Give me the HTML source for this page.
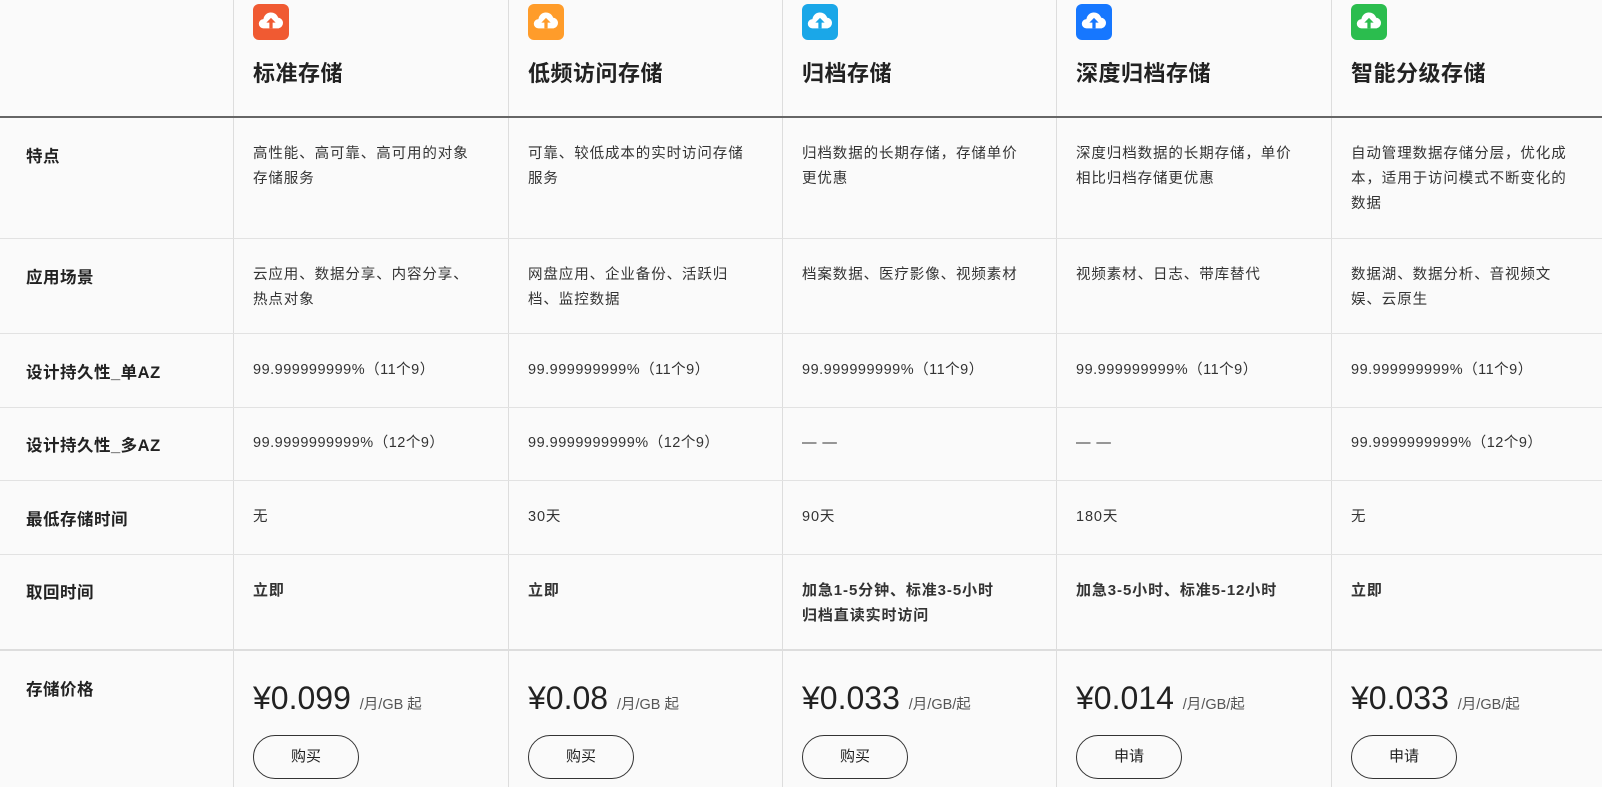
<!DOCTYPE html>
<html><head><meta charset="utf-8"><style>
*{margin:0;padding:0;box-sizing:border-box}
body{width:1602px;height:787px;overflow:hidden;background:#fafafa;font-family:"Liberation Sans","Noto Sans CJK SC",sans-serif;color:#222;position:relative}
.vl{position:absolute;top:0;bottom:0;width:1px;background:#ddd}
.hl{position:absolute;left:0;right:0;height:1px;background:#e2e2e2}
.t{position:absolute;font-size:14.5px;line-height:25px;color:#333;white-space:nowrap;letter-spacing:0.9px}
.n{letter-spacing:0.5px}
.lab{position:absolute;left:26px;font-size:16.5px;font-weight:bold;color:#222;letter-spacing:0.5px}
.ic{position:absolute;top:4px;width:36px;height:36px;border-radius:6px}
.ic svg{width:36px;height:36px}
.h{position:absolute;top:56px;font-size:22px;font-weight:bold;color:#222;letter-spacing:0.5px}
.p{position:absolute;top:680px;font-size:32px;color:#222}
.p span{font-size:14.5px;color:#555}
.b{position:absolute;top:735px;width:106px;height:44px;border:1px solid #333;border-radius:22px;text-align:center;line-height:42px;font-size:15px;color:#222}
.bd{font-weight:bold;font-size:15px}
</style></head><body>
<div class="vl" style="left:233px"></div><div class="vl" style="left:508px"></div><div class="vl" style="left:782px"></div><div class="vl" style="left:1056px"></div><div class="vl" style="left:1331px"></div>
<div class="hl" style="top:116px;height:2px;background:#666"></div>
<div class="hl" style="top:238px"></div><div class="hl" style="top:333px"></div><div class="hl" style="top:407px"></div><div class="hl" style="top:480px"></div><div class="hl" style="top:554px"></div><div class="hl" style="top:649px;height:2px;background:#ddd"></div>

<svg width="0" height="0" style="position:absolute"><defs><symbol id="cl" viewBox="0 0 31 31"><path d="M9 21a4 4 0 0 1 0-8a6.5 6.5 0 0 1 12.6-1.3A4.7 4.7 0 0 1 22 21z" fill="#fff"/><path d="M15.5 12l-4 4h2.6v5h2.8v-5h2.6z" fill="currentColor"/></symbol></defs></svg>
<div class="ic" style="left:253px;background:#f05a32;color:#f05a32"><svg><use href="#cl"/></svg></div>
<div class="ic" style="left:528px;background:#ff9c2a;color:#ff9c2a"><svg><use href="#cl"/></svg></div>
<div class="ic" style="left:802px;background:#1aa7e8;color:#1aa7e8"><svg><use href="#cl"/></svg></div>
<div class="ic" style="left:1076px;background:#1677ff;color:#1677ff"><svg><use href="#cl"/></svg></div>
<div class="ic" style="left:1351px;background:#2bbd4e;color:#2bbd4e"><svg><use href="#cl"/></svg></div>
<div class="h" style="left:253px">标准存储</div><div class="h" style="left:528px">低频访问存储</div><div class="h" style="left:802px">归档存储</div><div class="h" style="left:1076px">深度归档存储</div><div class="h" style="left:1351px">智能分级存储</div>

<div class="lab" style="top:143px">特点</div>
<div class="t" style="left:253px;top:142px">高性能、高可靠、高可用的对象<br>存储服务</div>
<div class="t" style="left:528px;top:142px">可靠、较低成本的实时访问存储<br>服务</div>
<div class="t" style="left:802px;top:142px">归档数据的长期存储，存储单价<br>更优惠</div>
<div class="t" style="left:1076px;top:142px">深度归档数据的长期存储，单价<br>相比归档存储更优惠</div>
<div class="t" style="left:1351px;top:142px">自动管理数据存储分层，优化成<br>本，适用于访问模式不断变化的<br>数据</div>

<div class="lab" style="top:264px">应用场景</div>
<div class="t" style="left:253px;top:263px">云应用、数据分享、内容分享、<br>热点对象</div>
<div class="t" style="left:528px;top:263px">网盘应用、企业备份、活跃归<br>档、监控数据</div>
<div class="t" style="left:802px;top:263px">档案数据、医疗影像、视频素材</div>
<div class="t" style="left:1076px;top:263px">视频素材、日志、带库替代</div>
<div class="t" style="left:1351px;top:263px">数据湖、数据分析、音视频文<br>娱、云原生</div>

<div class="lab" style="top:359px">设计持久性_单AZ</div>
<div class="t n" style="left:253px;top:358px">99.999999999%（11个9）</div><div class="t n" style="left:528px;top:358px">99.999999999%（11个9）</div><div class="t n" style="left:802px;top:358px">99.999999999%（11个9）</div><div class="t n" style="left:1076px;top:358px">99.999999999%（11个9）</div><div class="t n" style="left:1351px;top:358px">99.999999999%（11个9）</div>

<div class="lab" style="top:432px">设计持久性_多AZ</div>
<div class="t n" style="left:253px;top:431px">99.9999999999%（12个9）</div><div class="t n" style="left:528px;top:431px">99.9999999999%（12个9）</div><div class="t" style="left:802px;top:431px">— —</div><div class="t" style="left:1076px;top:431px">— —</div><div class="t n" style="left:1351px;top:431px">99.9999999999%（12个9）</div>

<div class="lab" style="top:506px">最低存储时间</div>
<div class="t" style="left:253px;top:505px">无</div><div class="t" style="left:528px;top:505px">30天</div><div class="t" style="left:802px;top:505px">90天</div><div class="t" style="left:1076px;top:505px">180天</div><div class="t" style="left:1351px;top:505px">无</div>

<div class="lab" style="top:579px">取回时间</div>
<div class="t bd" style="left:253px;top:578px">立即</div><div class="t bd" style="left:528px;top:578px">立即</div><div class="t bd" style="left:802px;top:578px">加急1-5分钟、标准3-5小时<br>归档直读实时访问</div><div class="t bd" style="left:1076px;top:578px">加急3-5小时、标准5-12小时</div><div class="t bd" style="left:1351px;top:578px">立即</div>

<div class="lab" style="top:676px">存储价格</div>
<div class="p" style="left:253px">¥0.099 <span>/月/GB 起</span></div>
<div class="p" style="left:528px">¥0.08 <span>/月/GB 起</span></div>
<div class="p" style="left:802px">¥0.033 <span>/月/GB/起</span></div>
<div class="p" style="left:1076px">¥0.014 <span>/月/GB/起</span></div>
<div class="p" style="left:1351px">¥0.033 <span>/月/GB/起</span></div>
<div class="b" style="left:253px">购买</div><div class="b" style="left:528px">购买</div><div class="b" style="left:802px">购买</div><div class="b" style="left:1076px">申请</div><div class="b" style="left:1351px">申请</div>
</body></html>
